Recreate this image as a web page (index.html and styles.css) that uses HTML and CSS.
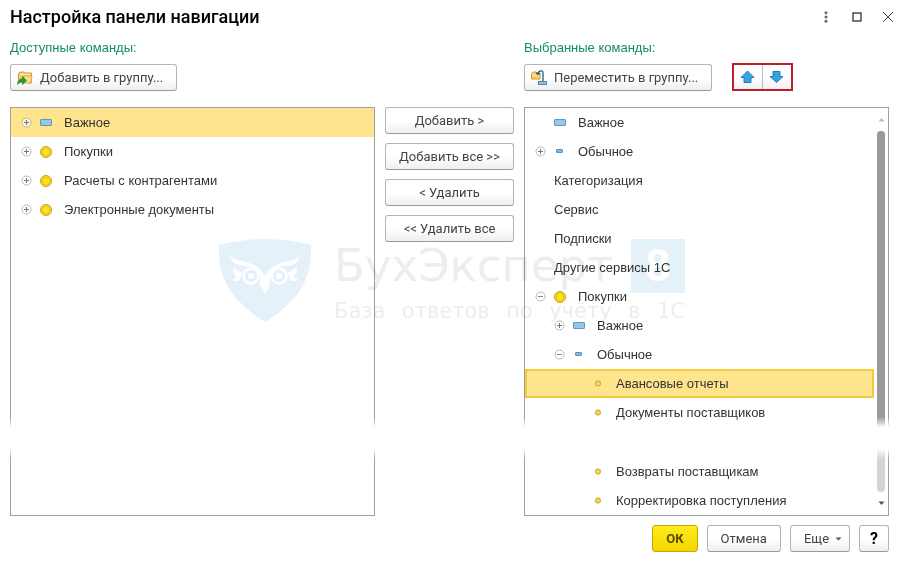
FILE: index.html
```html
<!DOCTYPE html>
<html lang="ru">
<head>
<meta charset="utf-8">
<title>Настройка панели навигации</title>
<link rel="stylesheet" href="styles.css">
</head>
<body>
<svg class="defs" aria-hidden="true">
  <symbol id="plus" viewBox="0 0 11 11"><circle cx="5.500" cy="5.500" r="4.500" fill="#fff" fill-opacity=".6" stroke="#b0b0b0" stroke-width=".9"/><path d="M3 5.500h5M5.500 3v5" stroke="#777"/></symbol>
  <symbol id="minus" viewBox="0 0 11 11"><circle cx="5.500" cy="5.500" r="4.500" fill="#fff" fill-opacity=".6" stroke="#b0b0b0" stroke-width=".9"/><path d="M3 5.500h5" stroke="#888"/></symbol>
  <symbol id="bar" viewBox="0 0 12 12"><rect x=".5" y="2.500" width="11" height="6" rx=".5" fill="#96c8e4" stroke="#6398bb"/></symbol>
  <symbol id="smallbar" viewBox="0 0 12 12"><rect x="2.500" y="3.500" width="6" height="3" rx=".5" fill="#82b9e2" stroke="#5a94c4"/></symbol>
  <symbol id="coin" viewBox="0 0 12 12"><circle cx="6" cy="6" r="5.500" fill="#f8dc2c" stroke="#c8a01c"/><circle cx="6" cy="6" r="3.800" fill="#ffe11e" stroke="#e2bb1c" stroke-width=".8"/></symbol>
  <symbol id="dot" viewBox="0 0 12 12"><circle cx="6" cy="5.500" r="2.600" fill="#f2dc4c" stroke="#c4a42c"/></symbol>
</svg>
<main class="window">
  <header class="titlebar">
    <h1>Настройка панели навигации</h1>
    <div class="window-tools">
      <button class="tool" aria-label="Меню"><svg width="12" height="12" viewBox="0 0 12 12" fill="#666"><circle cx="6" cy="1.700" r="1.500"/><circle cx="6" cy="6" r="1.500"/><circle cx="6" cy="10.300" r="1.500"/></svg></button>
      <button class="tool" aria-label="Развернуть"><svg width="12" height="12" viewBox="0 0 12 12"><rect x="2" y="2" width="8" height="8" fill="none" stroke="#222" stroke-width="1.200"/></svg></button>
      <button class="tool" aria-label="Закрыть"><svg width="12" height="12" viewBox="0 0 12 12"><path d="M1 1l10 10M11 1l-10 10" stroke="#444"/></svg></button>
    </div>
  </header>

  <div class="columns">
    <div class="head">
      <h2 id="available">Доступные команды:</h2>
      <button class="btn with-icon">
        <svg width="16" height="16" viewBox="0 0 16 16"><path d="M1.500 12V3.500L3 2h4l1 1h6.500v10z" fill="#f7cf6b" stroke="#d99a3d"/><path d="M3 4.500h10" stroke="#fff0b5"/><path d="M5 13l1-7h9l-1 7z" fill="#fbdc85" stroke="#dca044" stroke-width=".8"/><path d="M.500 14.500c.3-3.800 2-5.700 5-5.700V6.500l4 4-4 4v-2.500c-2 0-3.500.6-5 2.500z" fill="#24a03a" stroke="#148028" stroke-width=".6"/></svg>
        Добавить в группу...</button>
    </div>
    <div class="head second">
      <h2 id="chosen">Выбранные команды:</h2>
      <div class="toolbar">
        <button class="btn with-icon">
          <svg width="16" height="16" viewBox="0 0 16 16"><path d="M.5 9V3.500L2 2h3l1 1h3v6z" fill="#fbd15c" stroke="#cf9a32"/><path d="M1 5h7" stroke="#fff0b5"/><path d="M12 11.500V3c0-3-4-3-5 .5M5 2.500l1.700 2 2.300-1.300" fill="none" stroke="#235a86" stroke-width="1.300"/><rect x="7.500" y="11.500" width="8" height="3" fill="#8fc4e5" stroke="#4c86b0"/></svg>
          Переместить в группу...</button>
        <div class="movers">
          <button aria-label="Вверх"><svg width="15" height="14" viewBox="0 0 15 14"><path d="M7.500 1l6.500 6.500h-3V12.500h-7V7.500H1z" fill="#35a3e6" stroke="#257cae" stroke-linejoin="round"/></svg></button>
          <button aria-label="Вниз"><svg width="15" height="14" viewBox="0 0 15 14"><path d="M7.500 12.500L14 6.500h-3V1.500H4v5H1z" fill="#35a3e6" stroke="#257cae" stroke-linejoin="round"/></svg></button>
        </div>
      </div>
    </div>

    <ul class="panel" aria-labelledby="available">
      <li class="row current"><button class="toggle" aria-label="Развернуть"><svg><use href="#plus"/></svg></button><svg class="icon"><use href="#bar"/></svg><span>Важное</span></li>
      <li class="row"><button class="toggle" aria-label="Развернуть"><svg><use href="#plus"/></svg></button><svg class="icon"><use href="#coin"/></svg><span>Покупки</span></li>
      <li class="row"><button class="toggle" aria-label="Развернуть"><svg><use href="#plus"/></svg></button><svg class="icon"><use href="#coin"/></svg><span>Расчеты с контрагентами</span></li>
      <li class="row"><button class="toggle" aria-label="Развернуть"><svg><use href="#plus"/></svg></button><svg class="icon"><use href="#coin"/></svg><span>Электронные документы</span></li>
    </ul>

    <div class="transfer">
      <button class="btn">Добавить &gt;</button>
      <button class="btn">Добавить все &gt;&gt;</button>
      <button class="btn">&lt; Удалить</button>
      <button class="btn">&lt;&lt; Удалить все</button>
    </div>

    <div class="panel split">
      <ul class="tree" aria-labelledby="chosen">
        <li class="row"><i class="toggle"></i><svg class="icon"><use href="#bar"/></svg><span>Важное</span></li>
        <li class="row"><button class="toggle" aria-label="Развернуть"><svg><use href="#plus"/></svg></button><svg class="icon"><use href="#smallbar"/></svg><span>Обычное</span></li>
        <li class="row plain"><i class="toggle"></i><span>Категоризация</span></li>
        <li class="row plain"><i class="toggle"></i><span>Сервис</span></li>
        <li class="row plain"><i class="toggle"></i><span>Подписки</span></li>
        <li class="row plain"><i class="toggle"></i><span>Другие сервисы 1С</span></li>
        <li class="row"><button class="toggle" aria-label="Свернуть"><svg><use href="#minus"/></svg></button><svg class="icon"><use href="#coin"/></svg><span>Покупки</span></li>
        <li class="row level-2"><button class="toggle" aria-label="Развернуть"><svg><use href="#plus"/></svg></button><svg class="icon"><use href="#bar"/></svg><span>Важное</span></li>
        <li class="row level-2"><button class="toggle" aria-label="Свернуть"><svg><use href="#minus"/></svg></button><svg class="icon"><use href="#smallbar"/></svg><span>Обычное</span></li>
        <li class="row level-3 selected"><i class="toggle"></i><svg class="icon"><use href="#dot"/></svg><span>Авансовые отчеты</span></li>
        <li class="row level-3"><i class="toggle"></i><svg class="icon"><use href="#dot"/></svg><span>Документы поставщиков</span></li>
        <li class="gap" aria-hidden="true"></li>
        <li class="row level-3"><i class="toggle"></i><svg class="icon"><use href="#dot"/></svg><span>Возвраты поставщикам</span></li>
        <li class="row level-3"><i class="toggle"></i><svg class="icon"><use href="#dot"/></svg><span>Корректировка поступления</span></li>
      </ul>
      <div class="scrollbar" aria-hidden="true">
        <svg width="7" height="5" viewBox="0 0 7 5"><path d="M.5 4.500L3.500 1l3 3.500z" fill="#bbb"/></svg>
        <div class="track"><div class="thumb"></div></div>
        <svg width="7" height="5" viewBox="0 0 7 5"><path d="M.5.500L3.500 4l3-3.500z" fill="#555"/></svg>
      </div>
    </div>

    <div class="tear" aria-hidden="true"></div>

    <div class="watermark" aria-hidden="true">
      <svg width="94" height="84" viewBox="0 0 94 84">
        <path d="M1 6Q24 0 47 0T93 6C94 26 89 44 77 58Q64 73 47 83Q30 73 17 58C5 44 0 26 1 6z" fill="#e4f1f9"/>
        <g fill="none" stroke="#fff" stroke-width="2.500"><circle cx="33" cy="37" r="7.500"/><circle cx="61" cy="37" r="7.500"/></g>
        <g fill="#fff"><path d="M12 17c6 5 13 5 19 7 7 2 12 6 16 13 4-7 9-11 16-13 6-2 13-2 19-7-2 8-8 9-15 10-7 0-12 4-15 9v10l-5 9-5-9V36c-3-5-8-9-15-9-7-1-13-2-15-10z"/><path d="M15 28l9 6-2 7c-3 2-6 1-8-1l5-2c-3-2-4-5-4-10zM79 28l-9 6 2 7c3 2 6 1 8-1l-5-2c3-2 4-5 4-10z"/><circle cx="33" cy="37" r="3"/><circle cx="61" cy="37" r="3"/></g>
      </svg>
      <div class="brand">
        <div class="brand-name"><span>БухЭксперт</span><b>8</b></div>
        <div class="slogan"><span>База</span><span>ответов</span><span>по</span><span>учёту</span><span>в</span><span>1С</span></div>
      </div>
    </div>
  </div>

  <footer class="actions">
    <button class="btn primary">ОК</button>
    <button class="btn">Отмена</button>
    <button class="btn more">Еще <svg width="7" height="4" viewBox="0 0 7 4"><path d="M.5.500h6l-3 3z" fill="#555"/></svg></button>
    <button class="btn help">?</button>
  </footer>
</main>
</body>
</html>
```
FILE: styles.css
```css
* { box-sizing: border-box; }

body {
  margin: 0;
  background: #fff;
  color: #333;
  font: 13px/16px "Liberation Sans", sans-serif;
}

button { font: 13px/16px "Roboto", sans-serif; color: inherit; }
h1, h2, ul { margin: 0; padding: 0; }
ul { list-style: none; }
.defs { position: absolute; width: 0; height: 0; }

.window { padding: 0 14px 10px 10px; }

.titlebar {
  display: flex;
  align-items: center;
  justify-content: space-between;
  height: 34px;
}
.titlebar h1 { font: 500 18px/24px "Roboto", sans-serif; color: #000; }
.window-tools { display: flex; gap: 19px; margin-right: -5px; }
.tool { display: flex; padding: 0; border: 0; background: none; }

.columns {
  position: relative;
  display: grid;
  grid-template-columns: 1fr 129px 1fr;
  column-gap: 10px;
  row-gap: 16px;
}
.head h2 {
  margin: 6px 0 8px;
  font-size: 13px;
  line-height: 16px;
  font-weight: 400;
  color: #14905a;
}
.second { grid-column: 3; }
.toolbar { display: flex; gap: 20px; }

.btn {
  display: flex;
  align-items: center;
  justify-content: center;
  height: 27px;
  padding: 0 13px;
  border: 1px solid #b5b5b5;
  border-bottom-color: #999;
  border-radius: 3px;
  background: linear-gradient(#fff 50%, #efefef);
  color: #444;
  white-space: nowrap;
}
.with-icon { gap: 7px; padding: 0 13px 0 6px; }

.movers { display: flex; height: 28px; margin-top: -1px; border: 2px solid #be1e28; }
.movers button {
  display: flex;
  align-items: center;
  justify-content: center;
  width: 28px;
  padding: 0 2px 0 0;
  border: 0;
  background: linear-gradient(#fff 50%, #f1f1f1);
}
.movers button + button { width: 29px; border-left: 1px solid #bbb; }

.panel { border: 1px solid #a0a0a0; }
.split { display: flex; }
.tree { flex: 1; }
.row {
  display: flex;
  align-items: center;
  height: 29px;
  padding-left: 10px;
}
.row span { padding-left: 12px; }
.plain span { padding-left: 0; }
.level-2 { padding-left: 29px; }
.level-3 { padding-left: 48px; }
.toggle {
  flex: none;
  width: 11px;
  height: 11px;
  margin-right: 8px;
  padding: 0;
  border: 0;
  background: none;
}
.toggle svg { display: block; width: 11px; height: 11px; }
.icon { flex: none; width: 12px; height: 12px; }
.current { background: #ffe48e; }
.selected { background: #ffe48e; box-shadow: inset 0 0 0 2px #f3cb3a; }
.gap { height: 30px; }

.transfer { display: flex; flex-direction: column; gap: 9px; }

.scrollbar {
  display: flex;
  flex-direction: column;
  align-items: center;
  gap: 9px;
  width: 14px;
  padding: 9px 0;
}
.track { flex: 1; width: 8px; border-radius: 4px; background: #d4d4d4; }
.thumb { height: 88%; border-radius: 4px; background: #999; }

.tear {
  position: absolute;
  right: 0;
  bottom: 57px;
  left: 0;
  height: 42px;
  background: linear-gradient(#fff0, #fff 25%, #fff 75%, #fff0);
}

.watermark {
  position: absolute;
  top: 205px;
  left: 208px;
  display: flex;
  gap: 22px;
  mix-blend-mode: multiply;
  pointer-events: none;
}
.brand { width: 351px; color: #ecedf1; }
.brand-name { display: flex; justify-content: space-between; font: 45px/54px "DejaVu Sans", sans-serif; }
.brand-name b { width: 54px; background: #e4f1f9; color: #fff; font-family: "Roboto", sans-serif; text-align: center; }
.slogan { display: flex; justify-content: space-between; margin-top: 6px; font: 21px/24px "DejaVu Sans", sans-serif; }

.actions { display: flex; justify-content: flex-end; gap: 9px; margin-top: 9px; }
.btn.primary { padding: 0 13px; border-color: #c5a600; background: linear-gradient(#ffec1c, #f3d500); color: #5a4c00; font-weight: 700; }
.more { gap: 6px; padding: 0 7px 0 13px; }
.help { padding: 0 10px; color: #000; font-size: 16px; font-weight: 700; }
```
